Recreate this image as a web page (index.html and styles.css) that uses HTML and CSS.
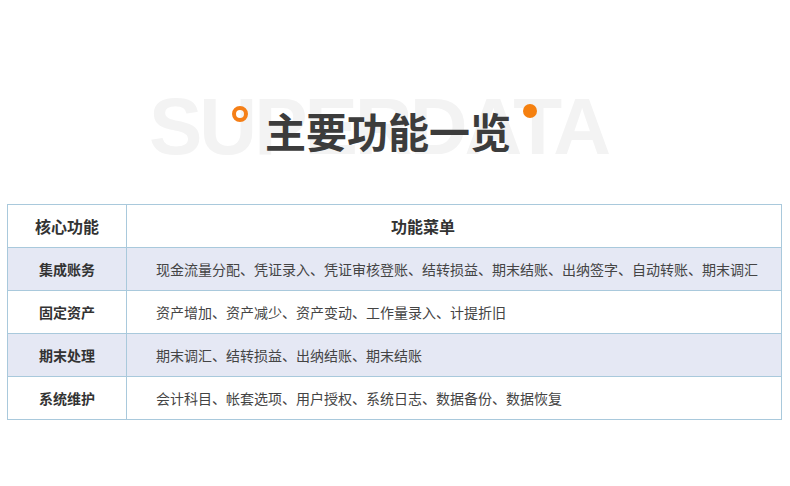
FILE: index.html
```html
<!DOCTYPE html>
<html lang="zh">
<head>
<meta charset="utf-8">
<link rel="stylesheet" href="styles.css">
</head>
<body>
<div class="hero">
  <div class="watermark" aria-hidden="true">SUPERDATA</div>
  <span class="ring"></span>
  <span class="dot"></span>
  <h1 class="title">主要功能一览</h1>
</div>
<table class="features">
  <thead>
    <tr><th class="col-key">核心功能</th><th class="col-menu">功能菜单</th></tr>
  </thead>
  <tbody>
    <tr class="alt"><td class="key">集成账务</td><td class="menu">现金流量分配、凭证录入、凭证审核登账、结转损益、期末结账、出纳签字、自动转账、期末调汇</td></tr>
    <tr><td class="key">固定资产</td><td class="menu">资产增加、资产减少、资产变动、工作量录入、计提折旧</td></tr>
    <tr class="alt"><td class="key">期末处理</td><td class="menu">期末调汇、结转损益、出纳结账、期末结账</td></tr>
    <tr><td class="key">系统维护</td><td class="menu">会计科目、帐套选项、用户授权、系统日志、数据备份、数据恢复</td></tr>
  </tbody>
</table>
</body>
</html>
```
FILE: styles.css
```css
html, body {
  margin: 0;
  padding: 0;
  background: #ffffff;
}
body {
  font-family: "Noto Sans CJK SC", "Noto Sans", sans-serif;
  color: #444;
}
.hero {
  position: relative;
  height: 204px;
  display: flex;
  justify-content: center;
}
.watermark {
  position: absolute;
  left: 149px;
  top: 87px;
  font-family: "Liberation Sans", Arial, sans-serif;
  font-size: 80px;
  font-weight: 700;
  letter-spacing: -3px;
  color: #f3f3f3;
  line-height: 1;
  white-space: nowrap;
}
.ring {
  position: absolute;
  left: 232px;
  top: 106px;
  width: 8px;
  height: 8px;
  border: 4px solid #f57f17;
  border-radius: 50%;
}
.dot {
  position: absolute;
  left: 523px;
  top: 104px;
  width: 14px;
  height: 14px;
  background: #f5800f;
  border-radius: 50%;
}
.title {
  position: relative;
  margin: 103px 0 0 0;
  font-size: 41px;
  font-weight: 700;
  line-height: 54px;
  height: 54px;
  color: #3c3c3c;
  transform: translateX(-7px);
}
.features {
  margin-left: 7px;
  width: 775px;
  border-collapse: collapse;
  font-size: 14px;
}
.features th, .features td {
  border: 1px solid #a9c9dc;
  height: 43px;
  padding: 0;
  box-sizing: border-box;
}
.features th {
  font-size: 16px;
  font-weight: 700;
  color: #333;
}
.col-key {
  width: 119px;
}
.col-menu {
  padding-right: 62px !important;
}
.key {
  text-align: center;
  font-weight: 700;
  color: #333;
}
.menu {
  padding-left: 29px !important;
  color: #444;
}
.alt td {
  background: #e5e8f4;
}
```
